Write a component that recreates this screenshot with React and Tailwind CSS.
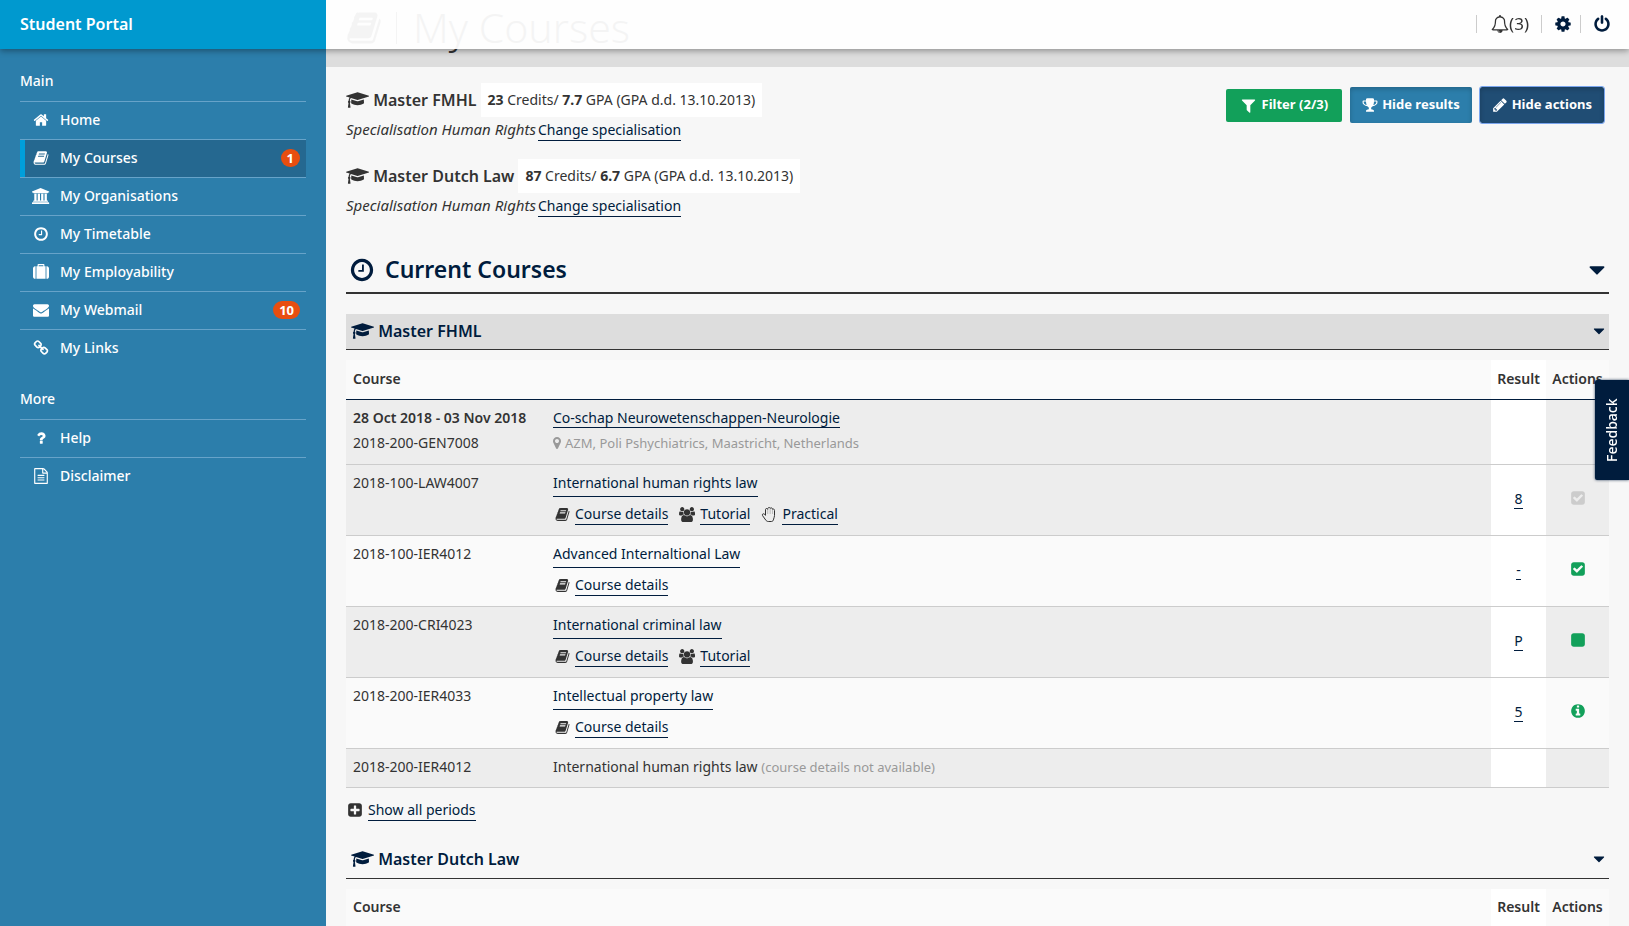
import React from "react";

const PATHS = {
  book: "M1703 478q40 57 18 129l-275 906q-19 64-76.5 107.5t-122.5 43.5h-923q-77 0-148.5-53.5t-99.5-131.5q-24-67-2-127 0-4 3-27t4-37q1-8-3-21.5t-3-19.5q2-11 8-21t16.5-23.5 16.5-23.5q23-38 45-91.5t30-91.5q3-10 .5-30t-.5-28q3-11 17-28t17-23q21-36 42-92t25-90q1-9-2.5-32t.5-28q4-13 22-30.5t22-22.5q19-26 42.5-84.5t27.5-96.5q1-8-3-25.5t-2-26.5q2-8 9-18t18-23 17-21q8-12 16.5-30.5t15-35 16-36 19.5-32 26.5-23.5 36-11.5 47.5 5.5l-1 3q38-9 51-9h761q74 0 114 56t18 130l-274 906q-36 119-71.5 153.5t-128.5 34.5h-869q-27 0-38 15-11 16-1 43 24 70 144 70h923q29 0 56-15.5t35-41.5l300-987q7-22 5-57 38 15 59 43zm-1064 2q-4 13 2 22.5t20 9.5h608q13 0 25.5-9.5t16.5-22.5l21-64q4-13-2-22.5t-20-9.5h-608q-13 0-25.5 9.5t-16.5 22.5zm-83 256q-4 13 2 22.5t20 9.5h608q13 0 25.5-9.5t16.5-22.5l21-64q4-13-2-22.5t-20-9.5h-608q-13 0-25.5 9.5t-16.5 22.5z",
  home: "M1472 992v480q0 26-19 45t-45 19h-384v-384h-256v384h-384q-26 0-45-19t-19-45v-480q0-1 .5-3t.5-3l575-474 575 474q1 2 1 6zm223-69l-62 74q-8 9-21 11h-3q-13 0-21-7l-692-577-692 577q-12 8-24 7-13-2-21-11l-62-74q-8-10-7-23.5t11-21.5l719-599q32-26 76-26t76 26l244 204v-195q0-14 9-23t23-9h192q14 0 23 9t9 23v408l219 182q10 8 11 21.5t-7 23.5z",
  university: "M960 0l960 384v128h-128q0 26-20.5 45t-48.5 19h-1526q-28 0-48.5-19t-20.5-45h-128v-128zm-704 640h256v768h128v-768h256v768h128v-768h256v768h128v-768h256v768h59q28 0 48.5 19t20.5 45v64h-1664v-64q0-26 20.5-45t48.5-19h59v-768zm1595 960q28 0 48.5 19t20.5 45v128h-1920v-128q0-26 20.5-45t48.5-19h1782z",
  clock: "M1024 544v448q0 14-9 23t-23 9h-320q-14 0-23-9t-9-23v-64q0-14 9-23t23-9h224v-352q0-14 9-23t23-9h64q14 0 23 9t9 23zm416 352q0-148-73-273t-198-198-273-73-273 73-198 198-73 273 73 273 198 198 273 73 273-73 198-198 73-273zm224 0q0 209-103 385.5t-279.5 279.5-385.5 103-385.5-103-279.5-279.5-103-385.5 103-385.5 279.5-279.5 385.5-103 385.5 103 279.5 279.5 103 385.5z",
  suitcase: "M640 256h512v-128h-512v128zm-352 0v1408h-64q-92 0-158-66t-66-158v-960q0-92 66-158t158-66h64zm1120 0v1408h-1024v-1408h128v-160q0-40 28-68t68-28h576q40 0 68 28t28 68v160h128zm384 224v960q0 92-66 158t-158 66h-64v-1408h64q92 0 158 66t66 158z",
  envelope: "M1792 710v794q0 66-47 113t-113 47h-1472q-66 0-113-47t-47-113v-794q44 49 101 87 362 246 497 345 57 42 92.5 65.5t94.5 48 110 24.5h2q51 0 110-24.5t94.5-48 92.5-65.5q170-123 498-345 57-39 100-87zm0-294q0 79-49 151t-122 123q-376 261-468 325-10 7-42.5 30.5t-54 38-52 32.5-57.5 27-50 9h-2q-23 0-50-9t-57.5-27-52-32.5-54-38-42.5-30.5q-91-64-262-182.5t-205-142.5q-62-42-117-115.5t-55-136.5q0-78 41.5-130t118.5-52h1472q65 0 112.5 47t47.5 113z",
  link: "M1520 1216q0-40-28-68l-208-208q-28-28-68-28-42 0-72 32 3 3 19 18.5t21.5 21.5 15 19 13 25.5 3.5 27.5q0 40-28 68t-68 28q-15 0-27.5-3.5t-25.5-13-19-15-21.5-21.5-18.5-19q-33 31-33 73 0 40 28 68l206 207q27 27 68 27 40 0 68-26l147-146q28-28 28-67zm-703-705q0-40-28-68l-206-207q-28-28-68-28-39 0-68 27l-147 146q-28 28-28 67 0 40 28 68l208 208q27 27 68 27 42 0 72-31-3-3-19-18.5t-21.5-21.5-15-19-13-25.5-3.5-27.5q0-40 28-68t68-28q15 0 27.5 3.5t25.5 13 19 15 21.5 21.5 18.5 19q33-31 33-73zm895 705q0 120-85 203l-147 146q-83 83-203 83-121 0-204-85l-206-207q-83-83-83-203 0-123 88-209l-88-88q-86 88-208 88-120 0-204-84l-208-208q-84-84-84-204t85-203l147-146q83-83 203-83 121 0 204 85l206 207q83 83 83 203 0 123-88 209l88 88q86-88 208-88 120 0 204 84l208 208q84 84 84 204z",
  question: "M1088 1256v240q0 16-12 28t-28 12h-240q-16 0-28-12t-12-28v-240q0-16 12-28t28-12h240q16 0 28 12t12 28zm316-600q0 54-15.5 101t-35 76.5-55 59.5-57.5 43.5-61 35.5q-41 23-68.5 65t-27.5 67q0 17-12 32.5t-28 15.5h-240q-15 0-25.5-18.5t-10.5-37.5v-45q0-83 65-156.5t143-108.5q59-27 84-56t25-76q0-42-46.5-74t-107.5-32q-65 0-108 29-35 25-107 115-13 16-31 16-12 0-25-8l-164-125q-13-10-15.5-25t5.5-28q160-266 464-266 80 0 161 31t146 83 106 127.5 41 158.5z",
  file: "M1596 380q28 28 48 76t20 88v1152q0 40-28 68t-68 28h-1344q-40 0-68-28t-28-68v-1600q0-40 28-68t68-28h896q40 0 88 20t76 48zm-444-244v376h376q-10-29-22-41l-313-313q-12-12-41-22zm384 1528v-1024h-416q-40 0-68-28t-28-68v-416h-768v1536h1280zm-1024-864q0-14 9-23t23-9h704q14 0 23 9t9 23v64q0 14-9 23t-23 9h-704q-14 0-23-9t-9-23v-64zm736 224q14 0 23 9t9 23v64q0 14-9 23t-23 9h-704q-14 0-23-9t-9-23v-64q0-14 9-23t23-9h704zm0 256q14 0 23 9t9 23v64q0 14-9 23t-23 9h-704q-14 0-23-9t-9-23v-64q0-14 9-23t23-9h704z",
  cap: "M1774 836l18 316q4 69-82 128t-235 93.5-323 34.5-323-34.5-235-93.5-82-128l18-316 574 181q22 7 48 7t48-7zm530-324q0 23-22 31l-1120 352q-4 1-10 1t-10-1l-652-206q-43 34-71 111.5t-34 178.5q63 36 63 109 0 69-58 107l58 433q2 14-8 25-9 11-24 11h-192q-15 0-24-11-10-11-8-25l58-433q-58-38-58-107 0-73 65-111 11-207 98-330l-333-104q-22-8-22-31t22-31l1120-352q4-1 10-1t10 1l1120 352q22 8 22 31z",
  bell: "M912 1696q0-16-16-16-59 0-101.5-42.5t-42.5-101.5q0-16-16-16t-16 16q0 73 51.5 124.5t124.5 51.5q16 0 16-16zm-666-288h1300q-266-300-266-832 0-51-24-105t-69-103-121.5-80.5-169.5-31.5-169.5 31.5-121.5 80.5-69 103-24 105q0 532-266 832zm1482 0q0 52-38 90t-90 38h-448q0 106-75 181t-181 75-181-75-75-181h-448q-52 0-90-38t-38-90q50-42 91-88t85-119.5 74.5-158.5 50-206 19.5-260q0-152 117-282.5t307-158.5q-8-19-8-39 0-40 28-68t68-28 68 28 28 68q0 20-8 39 190 28 307 158.5t117 282.5q0 139 19.5 260t50 206 74.5 158.5 85 119.5 91 88z",
  cog: "M1152 896q0-106-75-181t-181-75-181 75-75 181 75 181 181 75 181-75 75-181zm512-109v222q0 12-8 23t-20 13l-185 28q-19 54-39 91 35 50 107 138 10 12 10 25t-9 23q-27 37-99 108t-94 71q-12 0-26-9l-138-108q-44 23-91 38-16 136-29 186-7 28-36 28h-222q-14 0-24.5-8.5t-11.5-21.5l-28-184q-49-16-90-37l-141 107q-10 9-25 9-14 0-25-11-126-114-165-168-7-10-7-23 0-12 8-23 15-21 51-66.5t54-70.5q-27-50-41-99l-183-27q-13-2-21-12.5t-8-23.5v-222q0-12 8-23t19-13l186-28q14-46 39-92-40-57-107-138-10-12-10-24 0-10 9-23 26-36 98.5-107.5t94.5-71.5q13 0 26 10l138 107q44-23 91-38 16-136 29-186 7-28 36-28h222q14 0 24.5 8.5t11.5 21.5l28 184q49 16 90 37l142-107q9-9 24-9 13 0 25 10 129 119 165 170 7 8 7 22 0 12-8 23-15 21-51 66.5t-54 70.5q26 50 41 98l183 28q13 2 21 12.5t8 23.5z",
  power: "M1664 896q0 156-61 298t-164 245-245 164-298 61-298-61-245-164-164-245-61-298q0-182 80.5-343t226.5-270q43-32 95.5-25t83.5 50q32 42 24.5 94.5t-49.5 84.5q-98 74-151.5 181t-53.5 228q0 104 40.5 198.5t109.5 163.5 163.5 109.5 198.5 40.5 198.5-40.5 163.5-109.5 109.5-163.5 40.5-198.5q0-121-53.5-228t-151.5-181q-42-32-49.5-84.5t24.5-94.5q31-43 84-50t95 25q146 109 226.5 270t80.5 343zm-640-768v640q0 52-38 90t-90 38-90-38-38-90v-640q0-52 38-90t90-38 90 38 38 90z",
  filter: "M1595 295q17 41-14 70l-493 493v742q0 42-39 59-13 5-25 5-27 0-45-19l-256-256q-19-19-19-45v-486l-493-493q-31-29-14-70 17-39 59-39h1280q42 0 59 39z",
  trophy: "M522 883q-74-162-74-371h-256v96q0 78 94.5 162t235.5 113zm1078-275v-96h-256q0 209-74 371 141-29 235.5-113t94.5-162zm128-128v128q0 71-41.5 143t-112 130-173 97.5-215.5 44.5q-42 54-95 95-38 34-52.5 72.5t-14.5 89.5q0 54 30.5 91t97.5 37q75 0 133.5 45.5t58.5 114.5v64q0 14-9 23t-23 9h-832q-14 0-23-9t-9-23v-64q0-69 58.5-114.5t133.5-45.5q67 0 97.5-37t30.5-91q0-51-14.5-89.5t-52.5-72.5q-53-41-95-95-113-5-215.5-44.5t-173-97.5-112-130-41.5-143v-128q0-40 28-68t68-28h288v-96q0-66 47-113t113-47h576q66 0 113 47t47 113v96h288q40 0 68 28t28 68z",
  pencil: "M491 1536l91-91-235-235-91 91v107h128v128h107zm523-928q0-22-22-22-10 0-17 7l-542 542q-7 7-7 17 0 22 22 22 10 0 17-7l542-542q7-7 7-17zm-54-192l416 416-832 832h-416v-416zm683 96q0 53-37 90l-166 166-416-416 166-165q36-38 90-38 53 0 91 38l235 234q37 39 37 91z",
  marker: "M1152 640q0-106-75-181t-181-75-181 75-75 181 75 181 181 75 181-75 75-181zm256 0q0 109-33 179l-364 774q-16 33-47.5 52t-67.5 19-67.5-19-46.5-52l-365-774q-33-70-33-179 0-212 150-362t362-150 362 150 150 362z",
  users: "M593 896q-162 5-265 128h-134q-82 0-138-40.5t-56-118.5q0-353 124-353 6 0 43.5 21t97.5 42.5 119 21.5q67 0 133-23-5 37-5 66 0 139 81 256zm1071 637q0 120-73 189.5t-194 69.5h-874q-121 0-194-69.5t-73-189.5q0-53 3.5-103.5t14-109 26.5-108.5 43-97.5 62-81 85.5-53.5 111.5-20q10 0 43 21.5t73 48 107 48 135 21.5 135-21.5 107-48 73-48 43-21.5q61 0 111.5 20t85.5 53.5 62 81 43 97.5 26.5 108.5 14 109 3.5 103.5zm-1024-1277q0 106-75 181t-181 75-181-75-75-181 75-181 181-75 181 75 75 181zm704 384q0 159-112.5 271.5t-271.5 112.5-271.5-112.5-112.5-271.5 112.5-271.5 271.5-112.5 271.5 112.5 112.5 271.5zm576 225q0 78-56 118.5t-138 40.5h-134q-103-123-265-128 81-117 81-256 0-29-5-66 66 23 133 23 59 0 119-21.5t97.5-42.5 43.5-21q124 0 124 353zm-128-609q0 106-75 181t-181 75-181-75-75-181 75-181 181-75 181 75 75 181z",
  caret: "M1408 704q0 26-19 45l-448 448q-19 19-45 19t-45-19l-448-448q-19-19-19-45t19-45 45-19h896q26 0 45 19t19 45z",
  check: "M813 1299l614-614q19-19 19-45t-19-45l-102-102q-19-19-45-19t-45 19l-467 467-211-211q-19-19-45-19t-45 19l-102 102q-19 19-19 45t19 45l358 358q19 19 45 19t45-19zm851-883v960q0 119-84.5 203.5t-203.5 84.5h-960q-119 0-203.5-84.5t-84.5-203.5v-960q0-119 84.5-203.5t203.5-84.5h960q119 0 203.5 84.5t84.5 203.5z",
  square: "M1664 416v960q0 119-84.5 203.5t-203.5 84.5h-960q-119 0-203.5-84.5t-84.5-203.5v-960q0-119 84.5-203.5t203.5-84.5h960q119 0 203.5 84.5t84.5 203.5z",
  info: "M1152 1376v-160q0-14-9-23t-23-9h-96v-512q0-14-9-23t-23-9h-320q-14 0-23 9t-9 23v160q0 14 9 23t23 9h96v320h-96q-14 0-23 9t-9 23v160q0 14 9 23t23 9h448q14 0 23-9t9-23zm-128-896v-160q0-14-9-23t-23-9h-192q-14 0-23 9t-9 23v160q0 14 9 23t23 9h192q14 0 23-9t9-23zm640 416q0 209-103 385.5t-279.5 279.5-385.5 103-385.5-103-279.5-279.5-103-385.5 103-385.5 279.5-279.5 385.5-103 385.5 103 279.5 279.5 103 385.5z",
  plus: "M1408 960v-128q0-26-19-45t-45-19h-320v-320q0-26-19-45t-45-19h-128q-26 0-45 19t-19 45v320h-320q-26 0-45 19t-19 45v128q0 26 19 45t45 19h320v320q0 26 19 45t45 19h128q26 0 45-19t19-45v-320h320q26 0 45-19t19-45zm256-544v960q0 119-84.5 203.5t-203.5 84.5h-960q-119 0-203.5-84.5t-84.5-203.5v-960q0-119 84.5-203.5t203.5-84.5h960q119 0 203.5 84.5t84.5 203.5z",
};

const WIDTHS = { university: 1920, users: 1920, cap: 2304 };

function Icon({ name, className = "h-4" }) {
  return (
    <svg
      viewBox={`0 0 ${WIDTHS[name] || 1792} 1792`}
      className={`w-auto shrink-0 fill-current ${className}`}
      aria-hidden="true"
    >
      <path d={PATHS[name]} />
    </svg>
  );
}

function HandIcon() {
  return (
    <svg viewBox="0 0 16 16" className="size-4 shrink-0 fill-none stroke-current" aria-hidden="true">
      <path
        strokeLinejoin="round"
        d="M4.5 8V3.6c0-1.3 1.8-1.5 2.1-.3C6.5 1.3 8.9 1 9.200 2.300c.8-.9 2.300-.4 2.300.9 1-.6 2 .1 2 1.200V9.500c0 1.300-.6 2.300-.9 3.600-.3 1.500-.9 2.400-2.200 2.400H7.300c-1.200 0-1.900-.6-2.600-1.500L1.600 9.700C.8 8.500 2 7.200 3.200 8L4.500 9.300z"
      />
      <path strokeWidth="0.500" strokeOpacity="0.500" d="M6.700 3.300V8M9.200 2.500V8M11.500 3.200V8" />
    </svg>
  );
}

const MAIN_NAV = [
  { icon: "home", label: "Home" },
  { icon: "book", label: "My Courses", badge: 1, active: true },
  { icon: "university", label: "My Organisations" },
  { icon: "clock", label: "My Timetable" },
  { icon: "suitcase", label: "My Employability" },
  { icon: "envelope", label: "My Webmail", badge: 10 },
  { icon: "link", label: "My Links" },
];

const MORE_NAV = [
  { icon: "question", label: "Help" },
  { icon: "file", label: "Disclaimer" },
];

function NavGroup({ title, items }) {
  return (
    <section>
      <h2 className="h-[41px] text-[14px] leading-[42px] font-medium">{title}</h2>
      <ul>
        {items.map((item) => (
          <li key={item.label} className="border-t border-[#67a3c9]">
            <a
              href="#"
              className={
                item.active
                  ? "flex h-[37px] items-center border-l-5 border-[#009fdb] bg-[#256890] pr-1.5 pb-0.5"
                  : "flex h-[37px] items-center border-l-5 border-transparent pr-1.5 pb-0.5"
              }
            >
              <span className="flex w-8 justify-center">
                <Icon name={item.icon} />
              </span>
              <span className="ml-[3px] grow text-[14px] font-medium">{item.label}</span>
              {item.badge && (
                <span className="rounded-full bg-[#e84e10] px-1.5 text-[13px] leading-[18px] font-bold">
                  {item.badge}
                </span>
              )}
            </a>
          </li>
        ))}
      </ul>
    </section>
  );
}

const LINK = "border-b border-[#001c3d] text-[#001c3d]";

function Programme({ name, credits, gpa }) {
  return (
    <div className="h-[76px]">
      <div className="flex items-center">
        <Icon name="cap" className="h-[18px]" />
        <h2 className="ml-1 text-[16px] font-semibold">{name}</h2>
        <p className="ml-1 h-[34px] bg-white px-[7px] leading-[34px]">
          <b>{credits}</b> Credits/ <b>{gpa}</b> GPA (GPA d.d. 13.10.2013)
        </p>
      </div>
      <p className="mt-0.5 flex items-baseline gap-0.5 leading-5">
        <i className="text-[15px]">Specialisation Human Rights</i>{" "}
        <a href="#" className={LINK}>Change specialisation</a>
      </p>
    </div>
  );
}

function ProgrammeBar({ name, shaded }) {
  return (
    <h3 className={shaded ? "border-b border-[#333] bg-[#ddd]" : "border-b border-[#333]"}>
      <button type="button" className="flex h-[35px] w-full items-center px-[5px] pb-0.5 text-[#001c3d]">
        <Icon name="cap" className="h-[18px]" />
        <span className="ml-1 grow text-left text-[16px] font-semibold">{name}</span>
        <Icon name="caret" className="-mr-1 h-[18px]" />
      </button>
    </h3>
  );
}

function TableHead() {
  return (
    <thead>
      <tr className="h-[39px] border-b border-[#001c3d] bg-[#fafafa] text-left">
        <th scope="col" colSpan={2} className="px-[7px] pb-0.5 font-semibold">Course</th>
        <th scope="col" className="w-[55px] bg-white pb-0.5 text-center font-semibold">Result</th>
        <th scope="col" className="w-[63px] pb-0.5 text-center font-semibold">Actions</th>
      </tr>
    </thead>
  );
}

const DETAILS = { icon: "book", label: "Course details" };
const TUTORIAL = { icon: "users", label: "Tutorial" };
const PRACTICAL = { icon: "hand", label: "Practical" };

const COURSES = [
  {
    period: "28 Oct 2018 - 03 Nov 2018",
    code: "2018-200-GEN7008",
    title: "Co-schap Neurowetenschappen-Neurologie",
    place: "AZM, Poli Pshychiatrics, Maastricht, Netherlands",
    shaded: true,
  },
  { code: "2018-100-LAW4007", title: "International human rights law", links: [DETAILS, TUTORIAL, PRACTICAL], result: "8", action: "check", muted: true, shaded: true },
  { code: "2018-100-IER4012", title: "Advanced Internaltional Law", links: [DETAILS], result: "-", action: "check" },
  { code: "2018-200-CRI4023", title: "International criminal law", links: [DETAILS, TUTORIAL], result: "P", action: "square", shaded: true },
  { code: "2018-200-IER4033", title: "Intellectual property law", links: [DETAILS], result: "5", action: "info" },
  { code: "2018-200-IER4012", title: "International human rights law", note: "(course details not available)", shaded: true },
];

const ACTION_LABELS = { check: "Enrolled", square: "Enrol", info: "Information" };

function CourseTitle({ course }) {
  if (course.note) {
    return (
      <div>
        {course.title} <span className="text-[13px] text-[#999]">{course.note}</span>
      </div>
    );
  }
  if (course.place) {
    return (
      <>
        <div><a href="#" className={LINK}>{course.title}</a></div>
        <div className="mt-[5px] flex items-center text-[13px] text-[#999]">
          <Icon name="marker" className="-mx-[3px] h-3.5" />
          <span className="ml-1">{course.place}</span>
        </div>
      </>
    );
  }
  return (
    <>
      <div className="flex">
        <a href="#" className="border-b border-[#001c3d] pb-[3px] text-[#001c3d]">{course.title}</a>
      </div>
      <ul className="mt-[7px] flex gap-2.5">
        {course.links.map((link) => (
          <li key={link.label} className="flex items-center gap-1">
            <span className="flex w-[18px] justify-center">
              {link.icon === "hand" ? <HandIcon /> : <Icon name={link.icon} className="h-[15px]" />}
            </span>
            <a href="#" className={LINK}>{link.label}</a>
          </li>
        ))}
      </ul>
    </>
  );
}

function CourseTable() {
  return (
    <table className="mt-2.5 w-full border-collapse">
      <TableHead />
      <tbody>
        {COURSES.map((course) => (
          <tr
            key={course.code + course.title}
            className={
              course.shaded
                ? "border-b border-[#ccc] bg-[#ededed] first:h-[65px]"
                : "border-b border-[#ccc] bg-[#fafafa]"
            }
          >
            <td className="w-[200px] px-[7px] pt-2 pb-2.5 align-top leading-5">
              {course.period && <div className="mb-[5px] font-semibold">{course.period}</div>}
              {course.code}
            </td>
            <td className="px-[7px] pt-2 pb-2.5 align-top leading-5">
              <CourseTitle course={course} />
            </td>
            <td className="bg-white pb-0.5 text-center">
              {course.result && <a href="#" className={LINK}>{course.result}</a>}
            </td>
            <td className="pb-1">
              {course.action && (
                <button
                  type="button"
                  aria-label={ACTION_LABELS[course.action]}
                  disabled={course.muted}
                  className={course.muted ? "mx-auto block text-[#ccc]" : "mx-auto block text-[#12a05a]"}
                >
                  <Icon name={course.action} />
                </button>
              )}
            </td>
          </tr>
        ))}
      </tbody>
    </table>
  );
}

function TopBar() {
  return (
    <header className="fixed inset-x-0 top-0 z-10 flex h-[49px] shadow-[0_2px_6px_rgba(0,0,0,0.35)]">
      <div className="flex w-[326px] shrink-0 items-center bg-[#0099cf] px-5 pb-0.5 text-[16px] font-semibold text-white">
        Student Portal
      </div>
      <div className="flex grow items-center justify-end bg-white/95 pr-3.5 pb-0.5">
        <button type="button" aria-label="Notifications" className="flex h-[18px] items-center border-l border-[#ccc] px-3 text-[17px]">
          <Icon name="bell" className="ml-0.5 h-[18px]" />
          (3)
        </button>
        <button type="button" aria-label="Settings" className="flex h-[18px] items-center border-l border-[#ccc] pr-2 pl-3 text-[#001c3d]">
          <Icon name="cog" className="h-[18px]" />
        </button>
        <button type="button" aria-label="Log out" className="flex h-[18px] items-center border-l border-[#ccc] pr-1 pl-3 text-[#001c3d]">
          <Icon name="power" className="h-[18px]" />
        </button>
      </div>
    </header>
  );
}

export default function App() {
  return (
    <div className="flex h-screen overflow-hidden bg-[#f7f7f7] font-['Noto_Sans','Open_Sans',sans-serif] text-[14px] text-[#333]">
      <TopBar />

      <nav className="flex w-[326px] shrink-0 flex-col gap-[11px] bg-[#2c7eab] px-5 pt-[60px] text-white">
        <NavGroup title="Main" items={MAIN_NAV} />
        <NavGroup title="More" items={MORE_NAV} />
      </nav>

      <main className="min-w-0 grow">
        <div className="flex h-[67px] items-start bg-[#ddd] px-5">
          <h1 className="flex h-[55px] items-center text-[41px] font-light">
            <Icon name="book" className="h-9" />
            <span className="mr-4 ml-3.5 h-8 w-px bg-[#333]" />
            My Courses
          </h1>
        </div>

        <div className="px-5 pt-4">
          <div className="flex items-start justify-between">
            <div>
              <Programme name="Master FMHL" credits="23" gpa="7.7" />
              <Programme name="Master Dutch Law" credits="87" gpa="6.7" />
            </div>
            <div className="flex items-center gap-2 pt-1 pr-[5px] text-[13px] font-bold text-white">
              <button type="button" className="flex h-[33px] items-center gap-[5px] rounded-xs bg-[#12a05a] px-3.5">
                <Icon name="filter" className="h-[17px]" />
                Filter (2/3)
              </button>
              <button type="button" className="flex h-9 items-center gap-1 rounded-xs bg-[#2c7eab] px-3 shadow-[inset_0_2px_5px_rgba(0,0,0,0.2)]">
                <Icon name="trophy" />
                Hide results
              </button>
              <button type="button" className="flex h-9 items-center gap-1 rounded-xs bg-[#204d74] px-3 shadow-[inset_0_2px_5px_rgba(0,0,0,0.2)] outline-1 outline-[#7aa5ee]">
                <Icon name="pencil" />
                Hide actions
              </button>
            </div>
          </div>

          <h2 className="mt-3 border-b-2 border-[#333]">
            <button type="button" className="flex h-[45px] w-full items-center pl-[3px] text-[#001c3d]">
              <Icon name="clock" className="h-[26px]" />
              <span className="ml-2.5 grow text-left text-[23px] font-semibold">Current Courses</span>
              <Icon name="caret" className="-mr-px h-[26px]" />
            </button>
          </h2>

          <section className="pt-5">
            <ProgrammeBar name="Master FHML" shaded />
            <CourseTable />
            <div className="mt-3 flex items-center gap-[5px] leading-5">
              <Icon name="plus" className="ml-px h-4" />
              <a href="#" className={LINK}>Show all periods</a>
            </div>
          </section>

          <section className="pt-[22px]">
            <ProgrammeBar name="Master Dutch Law" />
            <table className="mt-2.5 w-full border-collapse">
              <TableHead />
            </table>
          </section>
        </div>
      </main>

      <button
        type="button"
        className="fixed top-[380px] right-0 z-20 flex h-[100px] w-[34px] rotate-180 items-center justify-center rounded-r-xs bg-[#001c3d] text-[14px] font-medium text-white shadow-[0_0_3px_rgba(0,28,61,0.8)] [writing-mode:vertical-rl]"
      >
        Feedback
      </button>
    </div>
  );
}
